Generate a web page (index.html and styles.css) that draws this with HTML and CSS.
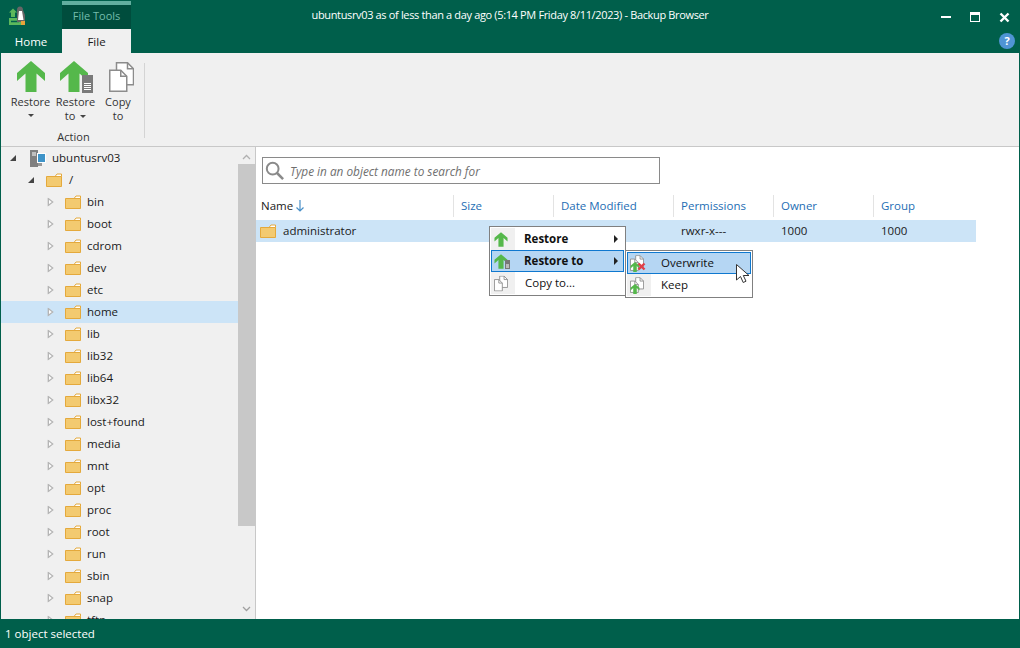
FILE: index.html
```html
<!DOCTYPE html>
<html lang="en">
<head>
<meta charset="utf-8">
<title>Backup Browser</title>
<link rel="stylesheet" href="styles.css">
</head>
<body>
<svg class="defs" width="0" height="0" aria-hidden="true">
  <defs>
    <symbol id="folder" viewBox="0 0 16 14">
      <path d="M.5 3.5h15v10H.5z" fill="#f3ca70" stroke="#e4a93c"/>
      <path d="M9 3.5 11 1h4.500v2.500z" fill="#fff" stroke="#e4a93c"/>
    </symbol>
    <symbol id="open" viewBox="0 0 8 10">
      <path d="M1.500 1v8L6.500 5z" fill="#fff" stroke="#b5b5b5" stroke-width="1.500"/>
    </symbol>
    <symbol id="shut" viewBox="0 0 8 8">
      <path d="M7 1v6H1z" fill="#444"/>
    </symbol>
    <symbol id="arrow" viewBox="0 0 30 31">
      <path d="M15 0 29 12v8L20.500 12.500V31h-11V12.500L1 20v-8z" fill="#55b84b"/>
    </symbol>
    <symbol id="docs" viewBox="0 0 16 18">
      <path d="M6.500.5h5l4 4v9h-9z" fill="#fff" stroke="#8c8c8c"/>
      <path d="M11.500.5v4h4" fill="none" stroke="#8c8c8c"/>
      <path d="M.5 4.500h5l4 4v9h-9z" fill="#fff" stroke="#8c8c8c"/>
      <path d="M5.500 4.500v4h4" fill="none" stroke="#8c8c8c"/>
    </symbol>
  </defs>
</svg>

<div class="window">
  <header class="titlebar">
    <div class="tabstrip-top">
      <svg class="app-icon" width="26" height="24" viewBox="0 0 26 24">
        <path d="M2 6.500 6 2.500 10 6.500H8V11H4V6.500z" fill="#5cb85c"/>
        <path d="M2 12h12v7H2z" fill="#5cb85c"/>
        <path d="M4 15.500h8" stroke="#00604c" stroke-width="1.500"/>
        <path d="M10 9V4c0-2 1-3.500 3-3.500S16 2 16 4l2 5v7h-8z" fill="#666"/>
        <path d="M12 5h3l1.500 9H11z" fill="#fff"/>
        <path d="M14 15h4v4h-4z" fill="#e8a33a"/>
      </svg>
      <div class="context-tab">File Tools</div>
      <h1 class="window-title">ubuntusrv03 as of less than a day ago (5:14 PM Friday 8/11/2023) - Backup Browser</h1>
      <div class="window-controls">
        <span class="ctl-min"></span>
        <span class="ctl-max"></span>
        <svg class="ctl-close" width="11" height="11" viewBox="0 0 11 11"><path d="M1.500 1.500l8 8M9.500 1.500l-8 8" stroke="#fff" stroke-width="2.400"/></svg>
      </div>
    </div>
    <div class="tabstrip">
      <div class="tab">Home</div>
      <div class="tab tab-active">File</div>
      <div class="help">?</div>
    </div>
  </header>

  <section class="ribbon">
    <div class="ribbon-group">
      <div class="ribbon-buttons">
        <div class="rbtn rbtn-restore">
          <svg class="ricon" width="30" height="31"><use href="#arrow"/></svg>
          <span>Restore</span>
          <i class="caret"></i>
        </div>
        <div class="rbtn rbtn-to">
          <span class="ricon-wrap">
            <svg class="ricon" width="30" height="31"><use href="#arrow"/></svg>
            <svg class="server-badge" width="11" height="18" viewBox="0 0 11 18">
              <path d="M0 0h11v18H0z" fill="#7a7a7a"/>
              <path d="M2 8.500h7M2 10.500h7M2 12.500h7M2 14.500h7" stroke="#fff"/>
            </svg>
          </span>
          <span>Restore</span>
          <span>to <i class="caret caret-inline"></i></span>
        </div>
        <div class="rbtn rbtn-copy">
          <svg class="ricon ricon-docs" width="25" height="30" viewBox="0 0 25 30">
            <path d="M7.500.750h11l6 6v16h-17z" fill="#fff" stroke="#8c8c8c" stroke-width="1.500"/>
            <path d="M18.500.750v6h6" fill="none" stroke="#8c8c8c" stroke-width="1.500"/>
            <path d="M.750 8.250h11l6 6v15h-17z" fill="#fff" stroke="#8c8c8c" stroke-width="1.500"/>
            <path d="M11.750 8.250v6h6" fill="none" stroke="#8c8c8c" stroke-width="1.500"/>
          </svg>
          <span>Copy</span>
          <span>to</span>
        </div>
      </div>
      <div class="group-label">Action</div>
    </div>
    <div class="ribbon-sep"></div>
  </section>

  <main class="body">
    <nav class="tree">
      <ul class="tree-list">
        <li class="row lvl0"><svg class="exp" width="8" height="8"><use href="#shut"/></svg>
          <svg class="srv" width="16" height="17" viewBox="0 0 16 17"><path d="M0 0h8v17H0z" fill="#808080"/><path d="M2 3h4M2 5h4" stroke="#fff"/><path d="M7 3h9v10H7z" fill="#fff"/><path d="M8 4h7v8H8z" fill="#3f94c9"/><path d="M8 13h4v3H8z" fill="#999"/></svg>
          <span>ubuntusrv03</span></li>
        <li class="row lvl1"><svg class="exp" width="8" height="8"><use href="#shut"/></svg><svg class="fld" width="16" height="14"><use href="#folder"/></svg><span>/</span></li>
        <li class="row lvl2"><svg class="exp" width="7" height="10" viewBox="0 0 8 10"><use href="#open"/></svg><svg class="fld" width="16" height="14"><use href="#folder"/></svg><span>bin</span></li>
        <li class="row lvl2"><svg class="exp" width="7" height="10" viewBox="0 0 8 10"><use href="#open"/></svg><svg class="fld" width="16" height="14"><use href="#folder"/></svg><span>boot</span></li>
        <li class="row lvl2"><svg class="exp" width="7" height="10" viewBox="0 0 8 10"><use href="#open"/></svg><svg class="fld" width="16" height="14"><use href="#folder"/></svg><span>cdrom</span></li>
        <li class="row lvl2"><svg class="exp" width="7" height="10" viewBox="0 0 8 10"><use href="#open"/></svg><svg class="fld" width="16" height="14"><use href="#folder"/></svg><span>dev</span></li>
        <li class="row lvl2"><svg class="exp" width="7" height="10" viewBox="0 0 8 10"><use href="#open"/></svg><svg class="fld" width="16" height="14"><use href="#folder"/></svg><span>etc</span></li>
        <li class="row lvl2 row-sel"><svg class="exp" width="7" height="10" viewBox="0 0 8 10"><use href="#open"/></svg><svg class="fld" width="16" height="14"><use href="#folder"/></svg><span>home</span></li>
        <li class="row lvl2"><svg class="exp" width="7" height="10" viewBox="0 0 8 10"><use href="#open"/></svg><svg class="fld" width="16" height="14"><use href="#folder"/></svg><span>lib</span></li>
        <li class="row lvl2"><svg class="exp" width="7" height="10" viewBox="0 0 8 10"><use href="#open"/></svg><svg class="fld" width="16" height="14"><use href="#folder"/></svg><span>lib32</span></li>
        <li class="row lvl2"><svg class="exp" width="7" height="10" viewBox="0 0 8 10"><use href="#open"/></svg><svg class="fld" width="16" height="14"><use href="#folder"/></svg><span>lib64</span></li>
        <li class="row lvl2"><svg class="exp" width="7" height="10" viewBox="0 0 8 10"><use href="#open"/></svg><svg class="fld" width="16" height="14"><use href="#folder"/></svg><span>libx32</span></li>
        <li class="row lvl2"><svg class="exp" width="7" height="10" viewBox="0 0 8 10"><use href="#open"/></svg><svg class="fld" width="16" height="14"><use href="#folder"/></svg><span>lost+found</span></li>
        <li class="row lvl2"><svg class="exp" width="7" height="10" viewBox="0 0 8 10"><use href="#open"/></svg><svg class="fld" width="16" height="14"><use href="#folder"/></svg><span>media</span></li>
        <li class="row lvl2"><svg class="exp" width="7" height="10" viewBox="0 0 8 10"><use href="#open"/></svg><svg class="fld" width="16" height="14"><use href="#folder"/></svg><span>mnt</span></li>
        <li class="row lvl2"><svg class="exp" width="7" height="10" viewBox="0 0 8 10"><use href="#open"/></svg><svg class="fld" width="16" height="14"><use href="#folder"/></svg><span>opt</span></li>
        <li class="row lvl2"><svg class="exp" width="7" height="10" viewBox="0 0 8 10"><use href="#open"/></svg><svg class="fld" width="16" height="14"><use href="#folder"/></svg><span>proc</span></li>
        <li class="row lvl2"><svg class="exp" width="7" height="10" viewBox="0 0 8 10"><use href="#open"/></svg><svg class="fld" width="16" height="14"><use href="#folder"/></svg><span>root</span></li>
        <li class="row lvl2"><svg class="exp" width="7" height="10" viewBox="0 0 8 10"><use href="#open"/></svg><svg class="fld" width="16" height="14"><use href="#folder"/></svg><span>run</span></li>
        <li class="row lvl2"><svg class="exp" width="7" height="10" viewBox="0 0 8 10"><use href="#open"/></svg><svg class="fld" width="16" height="14"><use href="#folder"/></svg><span>sbin</span></li>
        <li class="row lvl2"><svg class="exp" width="7" height="10" viewBox="0 0 8 10"><use href="#open"/></svg><svg class="fld" width="16" height="14"><use href="#folder"/></svg><span>snap</span></li>
        <li class="row lvl2"><svg class="exp" width="7" height="10" viewBox="0 0 8 10"><use href="#open"/></svg><svg class="fld" width="16" height="14"><use href="#folder"/></svg><span>tftp</span></li>
      </ul>
      <div class="scrollbar">
        <svg class="chev" width="9" height="6" viewBox="0 0 9 6"><path d="M1 5l3.500-3.500L8 5" fill="none" stroke="#b0b0b0" stroke-width="1.300"/></svg>
        <div class="thumb"></div>
        <svg class="chev chev-down" width="9" height="6" viewBox="0 0 9 6"><path d="M1 1l3.500 3.500L8 1" fill="none" stroke="#a0a0a0" stroke-width="1.300"/></svg>
      </div>
    </nav>

    <div class="content">
      <div class="search">
        <svg width="19" height="19" viewBox="0 0 21 21"><circle cx="8.500" cy="8.500" r="6.500" fill="none" stroke="#8a8a8a" stroke-width="2.200"/><path d="M13 13l7 7" stroke="#8a8a8a" stroke-width="2.800"/></svg>
        <span>Type in an object name to search for</span>
      </div>
      <div class="grid-head">
        <div class="col col-name">Name<svg width="8" height="12" viewBox="0 0 8 12"><path d="M4 0v11M.5 7.500 4 11l3.500-3.500" fill="none" stroke="#4a90c8" stroke-width="1.200"/></svg></div>
        <div class="col">Size</div>
        <div class="col">Date Modified</div>
        <div class="col">Permissions</div>
        <div class="col">Owner</div>
        <div class="col">Group</div>
      </div>
      <div class="grid-row">
        <div class="cell cell-name"><svg width="16" height="14"><use href="#folder"/></svg>administrator</div>
        <div class="cell"></div>
        <div class="cell"></div>
        <div class="cell">rwxr-x---</div>
        <div class="cell">1000</div>
        <div class="cell">1000</div>
      </div>
    </div>

    <div class="menu menu-main">
      <div class="mi mi-bold">
        <span class="mi-icon"><svg width="14" height="15"><use href="#arrow"/></svg></span>
        <span class="mi-text">Restore</span><i class="sub-arrow"></i>
      </div>
      <div class="mi mi-bold mi-hot">
        <span class="mi-icon"><svg width="14" height="15"><use href="#arrow"/></svg><svg class="mini-srv" width="5" height="9" viewBox="0 0 5 9"><path d="M0 0h5v9H0z" fill="#777"/><path d="M1 5h3M1 7h3" stroke="#fff"/></svg></span>
        <span class="mi-text">Restore to</span><i class="sub-arrow"></i>
      </div>
      <div class="mi">
        <span class="mi-icon"><svg width="14" height="17" viewBox="0 0 16 18"><use href="#docs"/></svg></span>
        <span class="mi-text mi-text-plain">Copy to...</span>
      </div>
    </div>

    <div class="menu menu-sub">
      <div class="mi mi-hot">
        <span class="mi-icon"><svg width="14" height="16" viewBox="0 0 16 18"><use href="#docs"/></svg><svg class="mini-up" width="10" height="10"><use href="#arrow"/></svg><svg class="mini-x" width="9" height="9" viewBox="0 0 9 9"><path d="M1.500 1.500l6 6M7.500 1.500l-6 6" stroke="#e0404a" stroke-width="2.400"/></svg></span>
        <span class="mi-text">Overwrite</span>
      </div>
      <div class="mi">
        <span class="mi-icon"><svg width="14" height="16" viewBox="0 0 16 18"><use href="#docs"/></svg><svg class="mini-up" width="10" height="10"><use href="#arrow"/></svg></span>
        <span class="mi-text">Keep</span>
      </div>
    </div>

    <svg class="cursor" width="15" height="20" viewBox="0 0 15 20"><path d="M.5.500v15.500l4-3.500 2.700 6 2.800-1.300-2.700-5.700H13z" fill="#fff" stroke="#333"/></svg>
  </main>

  <footer class="status">1 object selected</footer>
</div>
</body>
</html>
```
FILE: styles.css
```css
* { box-sizing: border-box; }
html, body { margin: 0; padding: 0; }
body {
  width: 1020px;
  height: 648px;
  overflow: hidden;
  font-family: "Open Sans", "Noto Sans", sans-serif;
  font-size: 11.5px;
  color: #1a1a1a;
  background: #fff;
}
.defs { position: absolute; }
.window {
  width: 1020px;
  height: 648px;
  display: flex;
  flex-direction: column;
  border-left: 1px solid #005f4b;
  border-right: 1px solid #005f4b;
  position: relative;
}

.titlebar { background: #005f4b; height: 53px; flex: none; margin: 0 -1px; }
.tabstrip-top { height: 29px; position: relative; display: flex; }
.app-icon { position: absolute; left: 7px; top: 6px; }
.context-tab {
  position: absolute;
  left: 62px;
  top: 1px;
  width: 69px;
  height: 28px;
  background: #004d3d;
  border-top: 4px solid #62ae9f;
  color: #74bdac;
  text-align: center;
  line-height: 22px;
  font-size: 11px;
}
.window-title {
  margin: 0;
  width: 100%;
  text-align: center;
  color: #fff;
  font-weight: 400;
  font-size: 11px;
  letter-spacing: -.35px;
  line-height: 30px;
}
.window-controls { position: absolute; top: 0; left: 0; width: 100%; height: 29px; }
.ctl-min { position: absolute; left: 941px; top: 16px; width: 10px; height: 2px; background: #fff; }
.ctl-max { position: absolute; left: 970px; top: 12px; width: 10px; height: 10px; border: 1px solid #fff; border-top-width: 3px; }
.ctl-close { position: absolute; left: 999px; top: 12px; }

.tabstrip { height: 24px; display: flex; position: relative; }
.tab { width: 62px; text-align: center; color: #fff; line-height: 26px; }
.tab-active { width: 69px; background: #f0f0f0; color: #1a1a1a; }
.help {
  position: absolute;
  right: 5px;
  top: 4px;
  width: 16px;
  height: 16px;
  border-radius: 50%;
  background: #4f94d4;
  color: #fff;
  font-weight: 700;
  font-size: 11px;
  line-height: 16px;
  text-align: center;
}

.ribbon {
  height: 94px;
  flex: none;
  background: #f0f0f0;
  border-bottom: 1px solid #c8c8c8;
  display: flex;
  padding-left: 2px;
  font-size: 11px;
}
.ribbon-group { width: 141px; display: flex; flex-direction: column; height: 93px; }
.ribbon-buttons { display: flex; padding-top: 8px; height: 76px; }
.rbtn { display: flex; flex-direction: column; align-items: center; line-height: 13.500px; color: #333; position: relative; }
.rbtn-restore { width: 55px; }
.rbtn-to { width: 51px; margin-left: -8px; }
.rbtn-copy { width: 40px; margin-left: -3px; }
.ricon { display: block; margin-bottom: 3px; flex: none; }
.ricon-wrap { position: relative; display: block; height: 34px; width: 30px; margin-right: 3px; }
.ricon-docs { margin-top: 1px; margin-left: 6px; }
.server-badge { position: absolute; left: 23px; top: 14px; }
.caret { display: block; width: 0; height: 0; margin-top: 5px; border: 3px solid transparent; border-top: 3px solid #444; border-bottom: 0; }
.caret-inline { display: inline-block; margin: 0 0 1px 2px; vertical-align: middle; }
.group-label { text-align: center; color: #333; line-height: 15px; }
.ribbon-sep { width: 1px; height: 75px; margin-top: 10px; background: #d4d4d4; }

.body { flex: 1; display: flex; min-height: 0; position: relative; }
.tree { width: 255px; flex: none; background: #f0f0f0; display: flex; overflow: hidden; border-right: 1px solid #c8c8c8; }
.tree-list { list-style: none; margin: 0; padding: 0; width: 237px; flex: none; }
.row { height: 22px; display: flex; align-items: center; color: #1a1a1a; position: relative; width: 237px; }
.row span { line-height: 22px; }
.row .exp { position: absolute; top: 7px; }
.row.lvl2 .exp { top: 6px; }
.lvl0 { padding-left: 29px; }
.lvl0 .exp { left: 8px; }
.lvl0 span { margin-left: 6px; }
.lvl1 { padding-left: 45px; }
.lvl1 .exp { left: 26px; }
.lvl1 span { margin-left: 7px; }
.lvl2 { padding-left: 64px; }
.lvl2 .exp { left: 46px; }
.lvl2 span { margin-left: 6px; }
.row-sel { background: #cce4f7; }
.fld { flex: none; }

.scrollbar { width: 17px; flex: none; background: #f0f0f0; position: relative; display: flex; flex-direction: column; align-items: center; }
.chev { margin-top: 7px; margin-bottom: 4px; flex: none; }
.thumb { width: 17px; height: 362px; background: #c8c8c8; }
.chev-down { margin-top: 80px; }

.content { flex: 1; background: #fff; padding-top: 10px; min-width: 0; }
.search {
  margin-left: 6px;
  width: 398px;
  height: 27px;
  border: 1px solid #8a8a8a;
  display: flex;
  align-items: center;
  gap: 6px;
  padding-left: 2px;
  color: #6f6f6f;
  font-style: italic;
  font-size: 11.800px;
}
.grid-head, .grid-row { display: grid; grid-template-columns: 197px 100px 120px 100px 100px 103px; width: 720px; }
.grid-head { margin-top: 10px; height: 26px; }
.col { color: #1e6eb4; padding-left: 7px; line-height: 22px; height: 22px; margin-top: 1px; border-left: 1px solid #e3e3e3; }
.col-name { color: #1a1a1a; border-left: 0; padding-left: 5px; display: flex; align-items: center; gap: 3px; }
.grid-row { background: #cce4f7; height: 22px; }
.cell { padding-left: 8px; line-height: 22px; }
.cell-name { padding-left: 4px; display: flex; align-items: center; gap: 7px; }

.menu { position: absolute; background: #fff; border: 1px solid #808080; padding: 1px; }
.menu::before { content: ""; position: absolute; left: 1px; top: 1px; bottom: 1px; width: 24px; background: #f0f0f0; }
.menu-main { left: 488px; top: 79px; width: 137px; height: 70px; }
.menu-sub { left: 624px; top: 103px; width: 128px; height: 48px; }
.mi { height: 22px; display: flex; align-items: center; position: relative; border: 1px solid transparent; }
.mi-hot { background: #b5d6f3; border-color: #0f78cf; }
.mi-bold { font-weight: 700; }
.mi-icon { width: 19px; flex: none; position: relative; display: flex; align-items: center; justify-content: center; height: 20px; margin-left: -1px; }
.mi-text { margin-left: 14px; flex: 1; color: #111; padding-bottom: 2px; }
.mi-text-plain { margin-left: 15px; }
.menu-sub .mi-text { margin-left: 15px; }
.sub-arrow { width: 0; height: 0; margin-right: 5px; border: 4px solid transparent; border-left: 4px solid #222; border-right: 0; }
.mini-srv { position: absolute; right: 0; top: 9px; }
.mini-up { position: absolute; left: 3px; bottom: 1px; }
.mini-x { position: absolute; right: 0; bottom: 2px; }
.cursor { position: absolute; left: 735px; top: 117px; }

.status {
  height: 29px;
  flex: none;
  background: #005f4b;
  color: #fff;
  margin: 0 -1px;
  padding-left: 5px;
  line-height: 29px;
}
```
